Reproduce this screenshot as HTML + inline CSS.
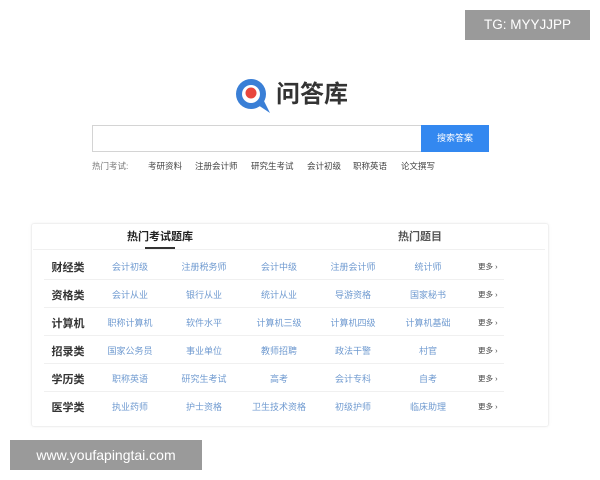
<!DOCTYPE html>
<html><head><meta charset="utf-8"><style>
*{margin:0;padding:0;box-sizing:border-box}
body{width:600px;height:480px;background:#fff;position:relative;font-family:"Liberation Sans","Noto Sans CJK SC",sans-serif;overflow:hidden}
.a{position:absolute}
.tg{left:465px;top:10px;width:125px;height:30px;background:#9a9a9a;color:#fff;font-size:13.5px;line-height:30px;text-align:center}
.wm{left:10px;top:440px;width:192px;height:30px;background:#9a9a9a;color:#fff;font-size:14px;line-height:30px;text-align:center}
.logo{left:276px;top:79px;font-size:24px;font-weight:bold;color:#333;letter-spacing:0px;line-height:32px}
.inp{left:92px;top:125px;width:330px;height:27px;border:1px solid #d4d4d4}
.btn{left:421px;top:125px;width:68px;height:27px;background:#3388f0;color:#fff;font-size:9px;text-align:center;line-height:27px}
.hot{top:160px;font-size:8.5px;color:#444}
.card{left:31px;top:223px;width:518px;height:204px;border:1px solid #f0f0f0;border-radius:3px;box-shadow:0 0 3px rgba(0,0,0,.05)}
.tab{top:229px;font-size:11px;font-weight:bold;line-height:16px}
.row{left:44px;width:460px;height:28px;border-bottom:1px solid #f0f0f0}
.c{position:absolute;font-size:11px;font-weight:bold;color:#333;transform:translateX(-50%);white-space:nowrap}
.l{position:absolute;font-size:9px;color:#6f9ad0;transform:translateX(-50%);white-space:nowrap}
.m{position:absolute;font-size:7.5px;color:#444;white-space:nowrap}
</style></head><body>
<div class="a tg">TG: MYYJJPP</div>
<svg class="a" style="left:234px;top:77px" width="38" height="36" viewBox="0 0 38 36">
<circle cx="17" cy="17" r="15" fill="#3a7fd6"/><circle cx="17" cy="17" r="9" fill="#fff"/><circle cx="17" cy="16" r="5.5" fill="#e8473e"/><path d="M24 28 L36 36 L30 24Z" fill="#3a7fd6"/></svg>
<div class="a logo">问答库</div>
<div class="a inp"></div><div class="a btn">搜索答案</div>
<div class="a hot" style="left:92px;color:#777">热门考试:</div>
<div class="a hot" style="left:148px">考研资料</div>
<div class="a hot" style="left:195px">注册会计师</div>
<div class="a hot" style="left:251px">研究生考试</div>
<div class="a hot" style="left:307px">会计初级</div>
<div class="a hot" style="left:353px">职称英语</div>
<div class="a hot" style="left:401px">论文撰写</div>
<div class="a card"></div>
<div class="a tab" style="left:127px;color:#222">热门考试题库</div>
<div class="a tab" style="left:398px;color:#555">热门题目</div>
<div class="a" style="left:145px;top:247px;width:30px;height:2px;background:#333"></div>
<div class="a" style="left:33px;top:249px;width:512px;height:1px;background:#f0f0f0"></div>
<div class="a row" style="top:252px"><span class="c" style="left:24px;top:7px">财经类</span><span class="l" style="left:86px;top:8px">会计初级</span><span class="l" style="left:160px;top:8px">注册税务师</span><span class="l" style="left:235px;top:8px">会计中级</span><span class="l" style="left:309px;top:8px">注册会计师</span><span class="l" style="left:384px;top:8px">统计师</span><span class="m" style="left:434px;top:9px">更多 ›</span></div>
<div class="a row" style="top:280px"><span class="c" style="left:24px;top:7px">资格类</span><span class="l" style="left:86px;top:8px">会计从业</span><span class="l" style="left:160px;top:8px">银行从业</span><span class="l" style="left:235px;top:8px">统计从业</span><span class="l" style="left:309px;top:8px">导游资格</span><span class="l" style="left:384px;top:8px">国家秘书</span><span class="m" style="left:434px;top:9px">更多 ›</span></div>
<div class="a row" style="top:308px"><span class="c" style="left:24px;top:7px">计算机</span><span class="l" style="left:86px;top:8px">职称计算机</span><span class="l" style="left:160px;top:8px">软件水平</span><span class="l" style="left:235px;top:8px">计算机三级</span><span class="l" style="left:309px;top:8px">计算机四级</span><span class="l" style="left:384px;top:8px">计算机基础</span><span class="m" style="left:434px;top:9px">更多 ›</span></div>
<div class="a row" style="top:336px"><span class="c" style="left:24px;top:7px">招录类</span><span class="l" style="left:86px;top:8px">国家公务员</span><span class="l" style="left:160px;top:8px">事业单位</span><span class="l" style="left:235px;top:8px">教师招聘</span><span class="l" style="left:309px;top:8px">政法干警</span><span class="l" style="left:384px;top:8px">村官</span><span class="m" style="left:434px;top:9px">更多 ›</span></div>
<div class="a row" style="top:364px"><span class="c" style="left:24px;top:7px">学历类</span><span class="l" style="left:86px;top:8px">职称英语</span><span class="l" style="left:160px;top:8px">研究生考试</span><span class="l" style="left:235px;top:8px">高考</span><span class="l" style="left:309px;top:8px">会计专科</span><span class="l" style="left:384px;top:8px">自考</span><span class="m" style="left:434px;top:9px">更多 ›</span></div>
<div class="a row" style="top:392px;border:none"><span class="c" style="left:24px;top:7px">医学类</span><span class="l" style="left:86px;top:8px">执业药师</span><span class="l" style="left:160px;top:8px">护士资格</span><span class="l" style="left:235px;top:8px">卫生技术资格</span><span class="l" style="left:309px;top:8px">初级护师</span><span class="l" style="left:384px;top:8px">临床助理</span><span class="m" style="left:434px;top:9px">更多 ›</span></div>
<div class="a wm">www.youfapingtai.com</div>
</body></html>
